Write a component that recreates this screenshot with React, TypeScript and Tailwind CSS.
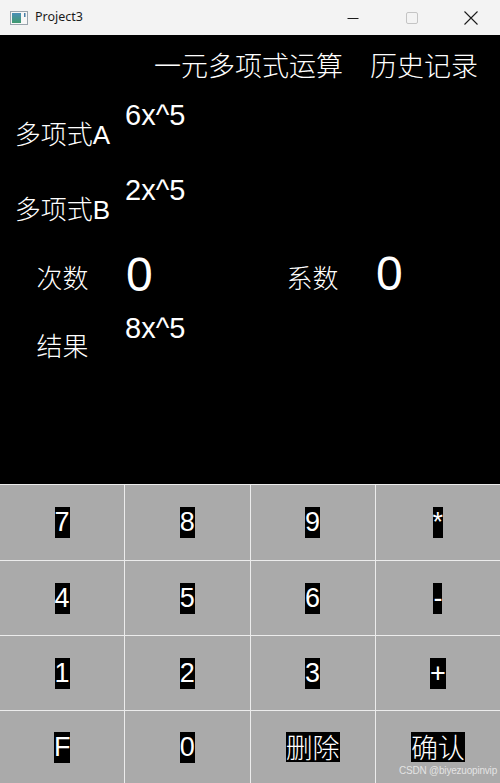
import React from "react";

const cjk = { fontFamily: '"Noto Sans CJK SC", "Noto Sans", sans-serif' };
const arial = { fontFamily: '"Liberation Sans", Arial, sans-serif' };

function Label({ text, latin, mt }: { text: string; latin?: string; mt: string }) {
  return (
    <div className={`flex justify-center ${mt}`}>
      <span className="text-[26px] leading-none text-white font-light whitespace-nowrap" style={cjk}>
        {text}
        {latin ? <span style={arial} className="font-normal">{latin}</span> : null}
      </span>
    </div>
  );
}

function Key({ label, zh }: { label: string; zh?: boolean }) {
  return (
    <div className="bg-[#aaaaaa] flex items-center justify-center">
      {zh ? (
        <span className="bg-black text-white text-[27px] leading-[30px] font-light" style={cjk}>
          {label}
        </span>
      ) : (
        <span className="bg-black text-white text-[27px] leading-[31px]" style={arial}>
          {label}
        </span>
      )}
    </div>
  );
}

export default function App() {
  const keys: { label: string; zh?: boolean }[] = [
    { label: "7" }, { label: "8" }, { label: "9" }, { label: "*" },
    { label: "4" }, { label: "5" }, { label: "6" }, { label: "-" },
    { label: "1" }, { label: "2" }, { label: "3" }, { label: "+" },
    { label: "F" }, { label: "0" }, { label: "删除", zh: true }, { label: "确认", zh: true },
  ];
  return (
    <div className="w-[500px] h-[783px] flex flex-col overflow-hidden relative bg-black">
      {/* Title bar */}
      <div className="h-[35px] bg-[#f3f3f3] flex items-center shrink-0">
        <div className="pl-[10px] pr-[7px] flex items-center">
          <svg width="18" height="14" viewBox="0 0 18 14">
            <defs>
              <linearGradient id="g" x1="0" y1="0" x2="0" y2="1">
                <stop offset="0" stopColor="#4a8fb8" />
                <stop offset="1" stopColor="#3f9a6e" />
              </linearGradient>
            </defs>
            <rect x="0.5" y="0.5" width="17" height="13" fill="#f7f7f7" stroke="#9aa4ad" />
            <rect x="2" y="2" width="9" height="10" fill="url(#g)" />
            <rect x="14" y="2" width="1.5" height="4" fill="#4a7fa8" />
          </svg>
        </div>
        <span className="text-[12.5px] text-[#1a1a1a]" style={{ fontFamily: '"Noto Sans", "Open Sans", sans-serif' }}>
          Project3
        </span>
        <div className="ml-auto flex h-full">
          <div className="w-[59px] flex items-center justify-center">
            <svg width="12" height="12" viewBox="0 0 12 12">
              <line x1="0.5" y1="6.5" x2="11.5" y2="6.5" stroke="#1b1b1b" strokeWidth="1" />
            </svg>
          </div>
          <div className="w-[59px] flex items-center justify-center">
            <svg width="12" height="12" viewBox="0 0 12 12">
              <rect x="0.5" y="0.5" width="11" height="11" rx="1.5" fill="none" stroke="#c4c4c4" strokeWidth="1" />
            </svg>
          </div>
          <div className="w-[59px] flex items-center justify-center">
            <svg width="14" height="14" viewBox="0 0 14 14">
              <path d="M0.5 0.5 L13.5 13.5 M13.5 0.5 L0.5 13.5" stroke="#1b1b1b" strokeWidth="1.1" />
            </svg>
          </div>
        </div>
      </div>

      {/* Display area */}
      <div className="flex-1 flex flex-col bg-black">
        <div className="h-[60px] shrink-0 pt-[16px] pl-[154px] flex gap-[27px] text-white text-[27px] leading-none font-light whitespace-nowrap" style={cjk}>
          <span>一元多项式运算</span>
          <span>历史记录</span>
        </div>

        <div className="h-[75px] shrink-0 grid grid-cols-4 items-start">
          <Label text="多项式" latin="A" mt="mt-[25px]" />
          <div className="col-span-3 mt-[6px] text-white text-[29px] leading-none" style={arial}>6x^5</div>
        </div>
        <div className="h-[75px] shrink-0 grid grid-cols-4 items-start">
          <Label text="多项式" latin="B" mt="mt-[25px]" />
          <div className="col-span-3 mt-[6px] text-white text-[29px] leading-none" style={arial}>2x^5</div>
        </div>
        <div className="h-[63px] shrink-0 grid grid-cols-4 items-start">
          <Label text="次数" mt="mt-[19px]" />
          <div className="mt-[6px] pl-[1px] text-white text-[48px] leading-none" style={arial}>0</div>
          <Label text="系数" mt="mt-[19px]" />
          <div className="mt-[5px] pl-[1px] text-white text-[48px] leading-none" style={arial}>0</div>
        </div>
        <div className="h-[75px] shrink-0 grid grid-cols-4 items-start">
          <Label text="结果" mt="mt-[24px]" />
          <div className="col-span-3 mt-[6px] text-white text-[29px] leading-none" style={arial}>8x^5</div>
        </div>
        <div className="flex-1" />
      </div>

      {/* Keypad */}
      <div className="h-[299px] shrink-0 bg-[#ececec] pt-[1px] grid grid-cols-4 grid-rows-[75px_74px_74px_1fr] gap-[1px]">
        {keys.map((k, i) => (
          <Key key={i} label={k.label} zh={k.zh} />
        ))}
      </div>

      <div
        className="absolute right-[3px] bottom-[7px] text-[10px] leading-none text-white/70 tracking-[-0.2px]"
        style={{ fontFamily: '"Liberation Sans", Arial, sans-serif' }}
      >
        CSDN @biyezuopinvip
      </div>
    </div>
  );
}
